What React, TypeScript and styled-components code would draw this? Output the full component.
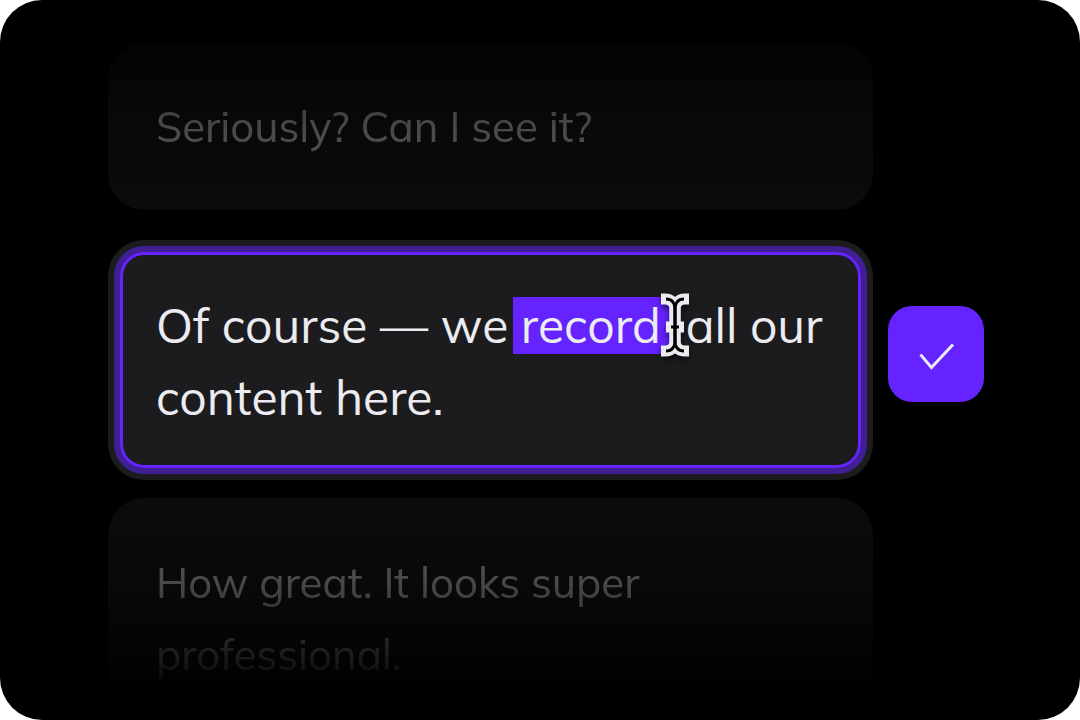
import React from 'react';
import styled, { createGlobalStyle } from 'styled-components';

const color = {
  ink: '#ebebf0',
  surface: '#1c1c1e',
  accent: '#6423ff',
  halo: '#3f1f92',
};

const GlobalStyle = createGlobalStyle`
  *, *::before, *::after { box-sizing: border-box; }
  body {
    margin: 0;
    background: #fff;
    font-family: 'Mulish', 'Open Sans', sans-serif;
    font-weight: 400;
    color: ${color.ink};
  }
`;

const Stage = styled.main`
  display: flex;
  flex-direction: column;
  min-height: 100vh;
  padding: 42px 96px 0 108px;
  border-radius: 42px;
  background: #000;
  overflow: hidden;
`;

const Row = styled.div<{ $gap?: number; $fill?: boolean }>`
  display: grid;
  grid-template-columns: minmax(0, 1fr) 96px;
  column-gap: 15px;
  align-items: ${p => (p.$fill ? 'stretch' : 'center')};
  flex: ${p => (p.$fill ? '1 0 auto' : 'none')};
  margin-top: ${p => p.$gap ?? 0}px;
`;

const FadedCard = styled.section<{ $fade: 'top' | 'bottom' }>`
  padding: ${p => (p.$fade === 'top' ? '49px 48px 47px' : '49px 48px 28px')};
  border-radius: ${p => (p.$fade === 'top' ? '36px' : '36px 36px 0 0')};
  background: ${color.surface};
  mask-image: ${p =>
    p.$fade === 'top'
      ? 'linear-gradient(rgba(0,0,0,.1), rgba(0,0,0,.31) 50%, rgba(0,0,0,.4))'
      : 'linear-gradient(rgba(0,0,0,.42), rgba(0,0,0,.31) 38%, rgba(0,0,0,.12) 70%, transparent 90%)'};
`;

const Caption = styled.p`
  margin: 0;
  font-size: 42px;
  line-height: 72px;
`;

const ActiveCard = styled.section`
  padding: 12px;
  border-radius: 36px;
  background: ${color.surface};
`;

const Editor = styled.div`
  padding: 34px 33px 32px;
  border: 3px solid ${color.accent};
  border-radius: 24px;
  box-shadow: 0 0 0 6px ${color.halo};
  font-size: 48px;
  line-height: 72px;
  outline: none;
`;

const Selection = styled.mark`
  position: relative;
  z-index: 0;
  color: inherit;
  background: none;

  &::before {
    content: '';
    position: absolute;
    z-index: -1;
    inset: 2px -8px 1px;
    background: ${color.accent};
  }
`;

const TextCursor = styled.svg`
  position: absolute;
  top: -2px;
  right: -16px;
  width: 28px;
  height: 64px;
  overflow: visible;
  filter: drop-shadow(0 4px 3px rgba(0, 0, 0, 0.5));
`;

const ConfirmButton = styled.button`
  display: grid;
  place-items: center;
  width: 96px;
  height: 96px;
  margin: 0 0 12px;
  padding: 0;
  border: 0;
  border-radius: 24px;
  background: ${color.accent};
  color: ${color.ink};
  cursor: pointer;
`;

function IBeam() {
  return (
    <TextCursor viewBox="0 0 28 64" fill="none" aria-hidden="true">
      <g stroke={color.ink} strokeWidth="11">
        <path d="M0 6H4C10 6 14 10 14 16V48C14 54 10 58 4 58H0" />
        <path d="M28 6H24C18 6 14 10 14 16V48C14 54 18 58 24 58H28" />
        <path d="M5 34H23" />
      </g>
      <g stroke="#000" strokeWidth="3">
        <path d="M5 6C11 6 14 10 14 16V48C14 54 11 58 5 58" />
        <path d="M23 6C17 6 14 10 14 16V48C14 54 17 58 23 58" />
        <path d="M10 34H18" />
      </g>
    </TextCursor>
  );
}

export default function App() {
  return (
    <>
      <GlobalStyle />
      <Stage>
        <Row>
          <FadedCard $fade="top">
            <Caption>Seriously? Can I see it?</Caption>
          </FadedCard>
        </Row>

        <Row $gap={30}>
          <ActiveCard>
            <Editor
              role="textbox"
              aria-label="Caption"
              aria-multiline="true"
              contentEditable
              suppressContentEditableWarning
              spellCheck={false}
            >
              Of course — we{' '}
              <Selection>
                record{'\u00a0'}
                <IBeam />
              </Selection>{' '}
              all our content here.
            </Editor>
          </ActiveCard>
          <ConfirmButton type="button" aria-label="Confirm">
            <svg width="48" height="48" viewBox="0 0 48 48" fill="none" aria-hidden="true">
              <path d="M8.5 24.5L19.5 37.6L41 14.4" stroke="currentColor" strokeWidth="3" />
            </svg>
          </ConfirmButton>
        </Row>

        <Row $gap={18} $fill>
          <FadedCard $fade="bottom">
            <Caption>How great. It looks super professional.</Caption>
          </FadedCard>
        </Row>
      </Stage>
    </>
  );
}
